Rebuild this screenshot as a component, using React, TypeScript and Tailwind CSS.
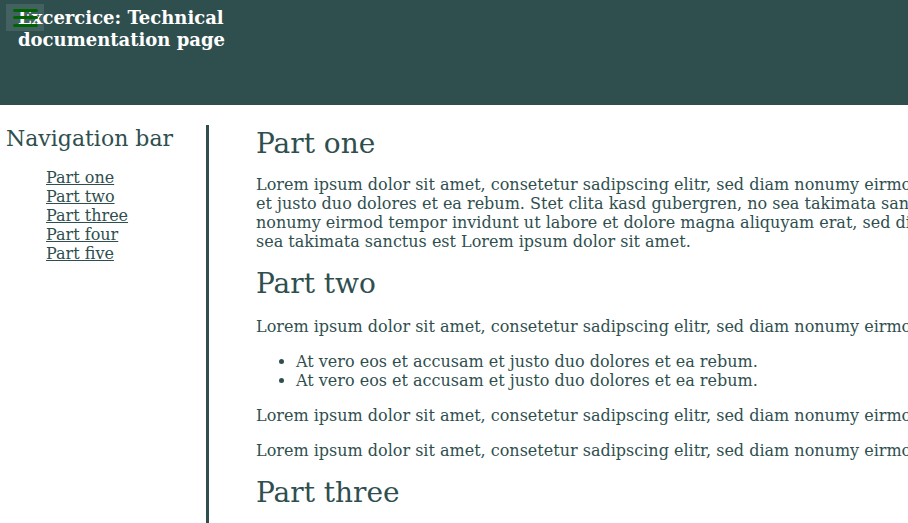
import React from "react";

const serif = "font-['DejaVu_Serif',serif]";

const para1 =
  "Lorem ipsum dolor sit amet, consetetur sadipscing elitr, sed diam nonumy eirmod tempor invidunt ut labore et dolore magna aliquyam erat, sed diam voluptua. At vero eos et accusam et justo duo dolores et ea rebum. Stet clita kasd gubergren, no sea takimata sanctus est Lorem ipsum dolor sit amet. Lorem ipsum dolor sit amet, consetetur sadipscing elitr, sed diam nonumy eirmod tempor invidunt ut labore et dolore magna aliquyam erat, sed diam voluptua. At vero eos et accusam et justo duo dolores et ea rebum. Stet clita kasd gubergren, no sea takimata sanctus est Lorem ipsum dolor sit amet.";

const shortPara =
  "Lorem ipsum dolor sit amet, consetetur sadipscing elitr, sed diam nonumy eirmod tempor invidunt ut labore et dolore magna aliquyam erat, sed diam voluptua.";

export default function App() {
  return (
    <div className={`w-[908px] h-[523px] overflow-hidden bg-white text-[#2f4f4f] ${serif}`}>
      <header className="relative h-[105px] bg-[#2f4f4f] pl-[18px] pt-[7px]">
        <h3 className="w-[220px] text-[18px] font-bold leading-[22px] text-white">
          Excercice: Technical documentation page
        </h3>
        <button className="absolute left-[6px] top-[4px] flex h-[27px] w-[38px] flex-col items-center justify-center gap-[4.5px] bg-white/10">
          <span className="block h-[3px] w-[25px] rounded-full bg-[#006400]" />
          <span className="block h-[3px] w-[25px] rounded-full bg-[#006400]" />
          <span className="block h-[3px] w-[25px] rounded-full bg-[#006400]" />
        </button>
      </header>
      <div className="mt-[20px] flex">
        <nav className="w-[209px] shrink-0 border-r-[3px] border-[#2f4f4f] pl-[6px] min-h-[420px]">
          <h2 className="text-[22px] leading-[26px] mt-[1px]">Navigation bar</h2>
          <ul className="mt-[16px] pl-[40px] text-[16px] leading-[19px]">
            <li><a href="#one" className="underline">Part one</a></li>
            <li><a href="#two" className="underline">Part two</a></li>
            <li><a href="#three" className="underline">Part three</a></li>
            <li><a href="#four" className="underline">Part four</a></li>
            <li><a href="#five" className="underline">Part five</a></li>
          </ul>
        </nav>
        <main className="w-[1542px] shrink-0 pl-[47px]">
          <section id="one">
            <h1 className="text-[28px] leading-[33px] mt-[2px]">Part one</h1>
            <p className="mt-[15px] text-[16px] leading-[19px]">{para1}</p>
          </section>
          <section id="two" className="mt-[16px]">
            <h1 className="text-[28px] leading-[33px]">Part two</h1>
            <p className="mt-[17px] text-[16px] leading-[19px]">{shortPara}</p>
            <ul className="mt-[16px] list-disc pl-[40px] text-[16px] leading-[19px]">
              <li>At vero eos et accusam et justo duo dolores et ea rebum.</li>
              <li>At vero eos et accusam et justo duo dolores et ea rebum.</li>
            </ul>
            <p className="mt-[16px] text-[16px] leading-[19px]">{shortPara}</p>
            <p className="mt-[16px] text-[16px] leading-[19px]">{shortPara}</p>
          </section>
          <section id="three" className="mt-[16px]">
            <h1 className="text-[28px] leading-[33px]">Part three</h1>
          </section>
        </main>
      </div>
    </div>
  );
}
